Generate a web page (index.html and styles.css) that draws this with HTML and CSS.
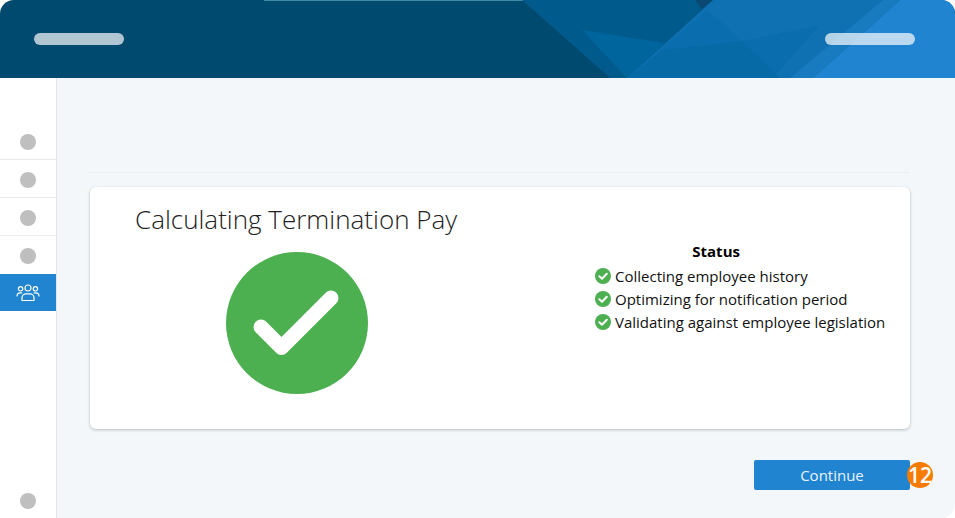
FILE: index.html
```html
<!DOCTYPE html>
<html lang="en">
<head>
<meta charset="utf-8">
<title>Calculating Termination Pay</title>
<link rel="stylesheet" href="styles.css">
</head>
<body>
<div class="app">
  <header class="header">
    <svg class="header-art" viewBox="0 0 955 78" width="955" height="78" aria-hidden="true">
      <rect class="a0" x="264" y="0" width="366" height="1"/>
      <polygon class="a1" points="522,0 713,0 627,78 610,78"/>
      <polygon class="a1b" points="695,0 713,0 702,9"/>
      <polygon class="a2" points="582,30 665,43 627,78 625,76"/>
      <polygon class="a3" points="713,0 900,0 813,78 627,78"/>
      <polygon class="a4" points="707,10 742,41 820,25 773,78 627,78"/>
      <polygon class="a5" points="663,50 742,41 780,78 627,78"/>
      <polygon class="a7" points="883,0 900,0 813,78 790,78"/>
      <polygon class="a6" points="900,0 955,0 955,78 813,78"/>
    </svg>
    <span class="pill pill-left"></span>
    <span class="pill pill-right"></span>
  </header>
  <div class="body">
    <nav class="sidebar">
      <div class="nav-item"><span class="dot"></span></div>
      <div class="nav-item"><span class="dot"></span></div>
      <div class="nav-item nav-low"><span class="dot"></span></div>
      <div class="nav-item nav-plain"><span class="dot"></span></div>
      <div class="nav-active">
        <svg class="people" viewBox="0 0 24 18" width="24" height="18" fill="none" stroke="#fff" stroke-width="1.2" stroke-linecap="round" stroke-linejoin="round">
          <circle cx="12" cy="4" r="3"/>
          <circle cx="4.6" cy="4.8" r="2.2"/>
          <circle cx="19.4" cy="4.8" r="2.2"/>
          <path d="M6 16.5v-2.6c0-2.4 2-4 4-4h4c2 0 4 1.6 4 4v2.6z"/>
          <path d="M1 12c0-1.8 1.300-3.200 3.200-3.200h1.600"/>
          <path d="M23 12c0-1.800-1.300-3.200-3.200-3.200h-1.600"/>
        </svg>
      </div>
      <div class="nav-bottom"><span class="dot"></span></div>
    </nav>
    <main class="main">
      <div class="rule"></div>
      <section class="card">
        <div class="card-left">
          <h1 class="title">Calculating Termination Pay</h1>
          <svg class="big-check" viewBox="0 0 142 142" width="142" height="142">
            <circle cx="71" cy="71" r="71" fill="#4caf50"/>
            <path d="M35 75 L55.500 95.500 L105 46" fill="none" stroke="#fff" stroke-width="15" stroke-linecap="round" stroke-linejoin="round"/>
          </svg>
        </div>
        <div class="status">
          <h2 class="status-title">Status</h2>
          <ul class="status-list">
            <li class="status-item"><svg class="tick" viewBox="0 0 16 16" width="16" height="16"><circle cx="8" cy="8" r="8" fill="#4caf50"/><path d="M4.300 8.300 7 10.800 11.800 5.800" fill="none" stroke="#fff" stroke-width="2" stroke-linecap="round" stroke-linejoin="round"/></svg>Collecting employee history</li>
            <li class="status-item"><svg class="tick" viewBox="0 0 16 16" width="16" height="16"><circle cx="8" cy="8" r="8" fill="#4caf50"/><path d="M4.300 8.300 7 10.800 11.800 5.800" fill="none" stroke="#fff" stroke-width="2" stroke-linecap="round" stroke-linejoin="round"/></svg>Optimizing for notification period</li>
            <li class="status-item"><svg class="tick" viewBox="0 0 16 16" width="16" height="16"><circle cx="8" cy="8" r="8" fill="#4caf50"/><path d="M4.300 8.300 7 10.800 11.800 5.800" fill="none" stroke="#fff" stroke-width="2" stroke-linecap="round" stroke-linejoin="round"/></svg>Validating against employee legislation</li>
          </ul>
        </div>
      </section>
      <div class="actions">
        <div class="button-wrap">
          <button class="button">Continue</button>
          <span class="badge">12</span>
        </div>
      </div>
    </main>
  </div>
</div>
</body>
</html>
```
FILE: styles.css
```css
* { box-sizing: border-box; }
html, body { margin: 0; padding: 0; background: #fff; }
body { font-family: "Open Sans", "Liberation Sans", sans-serif; color: #111; }
.app { width: 955px; height: 518px; display: flex; flex-direction: column; overflow: hidden; border-radius: 14px 14px 14px 0; }
.header { position: relative; height: 78px; flex: none; background: #00496f; display: flex; justify-content: space-between; align-items: flex-start; padding: 33px 40px 0 34px; }
.header-art { position: absolute; left: 0; top: 0; }
.a0 { fill: #3c8aa8; }
.a1 { fill: #005a8b; }
.a1b { fill: #0a4a72; }
.a2 { fill: #00659d; }
.a3 { fill: #0f71b2; }
.a4 { fill: #0a6eae; }
.a5 { fill: #066aa7; }
.a6 { fill: #2084d1; }
.a7 { fill: #187abf; }
.pill { position: relative; width: 90px; height: 12px; border-radius: 6px; background: rgba(255,255,255,.69); }
.body { flex: 1; display: flex; min-height: 0; }
.sidebar { width: 57px; flex: none; background: #fff; border-right: 1px solid #e3e6e9; padding-top: 44px; display: flex; flex-direction: column; }
.nav-item { height: 38px; padding-top: 2px; display: flex; align-items: center; justify-content: center; border-bottom: 1px solid #ebebeb; }
.nav-low { padding-top: 3px; }
.nav-plain { border-bottom: 0; }
.dot { width: 16px; height: 16px; border-radius: 50%; background: #bfbfbf; }
.nav-active { height: 37px; background: #2084d1; display: flex; align-items: center; justify-content: center; }
.nav-bottom { margin-top: auto; height: 34px; display: flex; align-items: center; justify-content: center; }
.main { flex: 1; background: #f3f7fa; padding: 94px 45px 0 31px; display: flex; flex-direction: column; }
.rule { height: 1px; background: #e9eef2; }
.card { margin: 14px 0 0 2px; height: 242px; background: #fff; border-radius: 6px; box-shadow: 0 1px 3px rgba(0,0,0,.25); display: flex; }
.card-left { width: 470px; padding: 15px 0 0 45px; }
.title { margin: 0; font-size: 26px; line-height: 34px; font-weight: 300; color: #222; white-space: nowrap; }
.big-check { display: block; margin: 16px 0 0 91px; }
.status { padding-top: 53px; margin-left: 35px; }
.status-title { margin: 0 48px 1px 0; font-size: 15px; line-height: 23px; font-weight: 700; color: #000; text-align: center; }
.status-list { margin: 0; padding: 0; list-style: none; }
.status-item { display: flex; align-items: center; gap: 4px; height: 23px; font-size: 15px; color: #111; white-space: nowrap; }
.tick { flex: none; margin-top: 1px; }
.actions { margin-top: 31px; display: flex; justify-content: flex-end; }
.button-wrap { position: relative; }
.button { display: block; width: 156px; height: 30px; border: 0; border-radius: 2px; padding: 0; background: #2084d1; color: #e8f3fb; font: 400 15px "Open Sans", sans-serif; }
.badge { position: absolute; left: 153px; top: 2px; width: 26px; height: 26px; border-radius: 50%; background: #f57c00; color: #fff; font-size: 21px; font-weight: 600; line-height: 26px; text-align: center; }
```
